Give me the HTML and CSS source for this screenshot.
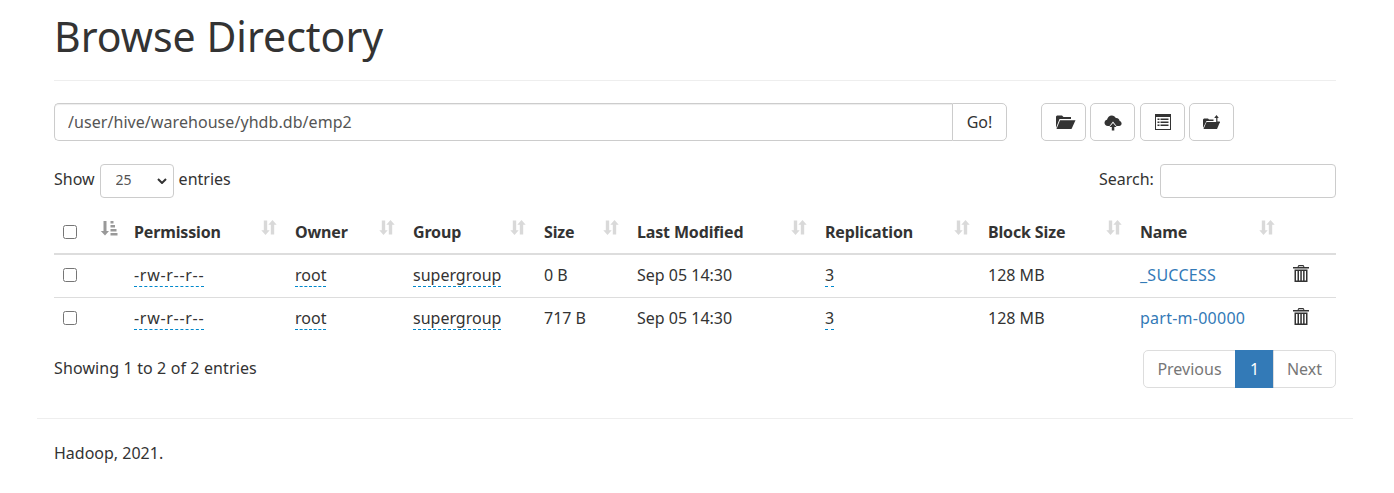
FILE: index.html
```html
<!DOCTYPE html>
<html lang="en">
<head>
  <meta charset="UTF-8">
  <title>Browsing HDFS</title>
  <link rel="stylesheet" href="styles.css">
</head>
<body>
  <div class="container">
    <div class="page-header">
      <h1>Browse Directory</h1>
    </div>

    <div class="toolbar">
      <div class="input-group">
        <input class="path-input" type="text" value="/user/hive/warehouse/yhdb.db/emp2">
        <button class="btn btn-go" type="button">Go!</button>
      </div>
      <div class="btn-row">
        <button class="btn btn-icon shift-2" type="button" title="Create Directory">
          <svg width="21" height="16" viewBox="0 0 21 16"><path fill="#333" d="M1 14V2.500L2 1.500h5l1.500 1.500h7.500v2H4.500L1 14z"/><path fill="#333" d="M5 6.300h15.500L16.500 15H1.500z"/></svg>
        </button>
        <button class="btn btn-icon" type="button" title="Upload Files">
          <svg width="18" height="17" viewBox="0 0 18 16"><path fill="#333" d="M4 11.500C1.800 11.500.5 10 .5 8.300.5 6.700 1.600 5.500 3 5.300 3.500 3 5.300 1 7.800 1c1.800 0 3.200 1 4 2.400 2.400-.2 3.800 1.500 3.800 3.100 1.200.3 2 1.300 2 2.500 0 1.400-1 2.500-2.500 2.500h-2.600L9 7 5.500 11.500z"/><path fill="#333" d="M9 8.500l3.500 4h-2.200V16H7.800v-3.500H5.500z"/></svg>
        </button>
        <button class="btn btn-icon btn-table" type="button" title="Cut">
          <svg width="16" height="16" viewBox="0 0 16 16"><path fill="#333" d="M0 0h16v16H0z"/><path fill="#fff" d="M1 3h14v12H1z"/><path fill="#333" d="M2.500 4.500h2v1.500h-2zM5.500 4.500h8v1.500h-8zM2.500 7.500h2V9h-2zM5.500 7.500h8V9h-8zM2.500 10.500h2V12h-2zM5.500 10.500h8V12h-8z"/></svg>
        </button>
        <button class="btn btn-icon" type="button" title="Paste">
          <svg width="18" height="15" viewBox="0 0 18 15"><path fill="#333" d="M0 13V4.500L1 3.500h4l1 1h4.500V6H3.500z"/><path fill="#333" d="M3.500 7H17L14 14H.5z"/><path fill="#333" d="M13.500 0l2.300 3h-1.400v3.500h2.400v1.200h-3.600V3h-2z"/></svg>
        </button>
      </div>
    </div>

    <div class="table-controls">
      <label class="length-label">Show
        <span class="select-wrap">
          <select class="length-select"><option>25</option></select>
          <svg class="chevron" width="10" height="6" viewBox="0 0 10 6"><path fill="none" stroke="#333" stroke-width="2" d="M1 1l4 4 4-4"/></svg>
        </span>
        entries</label>
      <label class="search-label">Search: <input class="search-input" type="search"></label>
    </div>

    <table class="file-table">
      <thead>
        <tr>
          <th class="col-check"><input class="check" type="checkbox"></th>
          <th class="col-sort">
            <svg class="sort-icon active" width="18" height="18" viewBox="0 0 18 16"><path d="M3.500 1h3v10h2.500L5 15.500.8 11h2.700z"/><path d="M10.500 1h3v2.500h-3zM10.500 5h4.500v2.500h-4.500zM10.500 9h6v2.500h-6zM10.500 13h7v2.500h-7z"/></svg>
          </th>
          <th class="col-perm"><span>Permission</span><svg class="sort-icon" width="16" height="17" viewBox="0 0 16 16"><use href="#sort-both"/></svg></th>
          <th class="col-owner"><span>Owner</span><svg class="sort-icon" width="16" height="17" viewBox="0 0 16 16"><use href="#sort-both"/></svg></th>
          <th class="col-group"><span>Group</span><svg class="sort-icon" width="16" height="17" viewBox="0 0 16 16"><use href="#sort-both"/></svg></th>
          <th class="col-size"><span>Size</span><svg class="sort-icon" width="16" height="17" viewBox="0 0 16 16"><use href="#sort-both"/></svg></th>
          <th class="col-date"><span>Last Modified</span><svg class="sort-icon" width="16" height="17" viewBox="0 0 16 16"><use href="#sort-both"/></svg></th>
          <th class="col-repl"><span>Replication</span><svg class="sort-icon" width="16" height="17" viewBox="0 0 16 16"><use href="#sort-both"/></svg></th>
          <th class="col-block"><span>Block Size</span><svg class="sort-icon" width="16" height="17" viewBox="0 0 16 16"><use href="#sort-both"/></svg></th>
          <th class="col-name"><span>Name</span><svg class="sort-icon" width="16" height="17" viewBox="0 0 16 16"><use href="#sort-both"/></svg></th>
          <th class="col-del"></th>
        </tr>
      </thead>
      <tbody>
        <tr>
          <td><input class="check" type="checkbox"></td>
          <td></td>
          <td><a class="editable perm" href="#">-rw-r--r--</a></td>
          <td><a class="editable" href="#">root</a></td>
          <td><a class="editable" href="#">supergroup</a></td>
          <td>0 B</td>
          <td>Sep 05 14:30</td>
          <td><a class="editable" href="#">3</a></td>
          <td>128 MB</td>
          <td><a class="file-link" href="#">_SUCCESS</a></td>
          <td><svg class="trash" width="16" height="17" viewBox="0 0 16 17"><use href="#trash"/></svg></td>
        </tr>
        <tr>
          <td><input class="check" type="checkbox"></td>
          <td></td>
          <td><a class="editable perm" href="#">-rw-r--r--</a></td>
          <td><a class="editable" href="#">root</a></td>
          <td><a class="editable" href="#">supergroup</a></td>
          <td>717 B</td>
          <td>Sep 05 14:30</td>
          <td><a class="editable" href="#">3</a></td>
          <td>128 MB</td>
          <td><a class="file-link" href="#">part-m-00000</a></td>
          <td><svg class="trash" width="16" height="17" viewBox="0 0 16 17"><use href="#trash"/></svg></td>
        </tr>
      </tbody>
    </table>

    <div class="table-footer">
      <div class="info">Showing 1 to 2 of 2 entries</div>
      <ul class="pagination">
        <li class="disabled prev">Previous</li>
        <li class="current">1</li>
        <li class="disabled next">Next</li>
      </ul>
    </div>
  </div>

  <footer class="site-footer">
    <p>Hadoop, 2021.</p>
  </footer>

  <svg class="defs" width="0" height="0">
    <symbol id="sort-both" viewBox="0 0 16 16">
      <path d="M2.800 1h3.400v9.800h2.500L4.500 15.500.3 10.800h2.500z"/>
      <path d="M9.800 15h3.400V5.200h2.500L11.500.5 7.300 5.200h2.500z"/>
    </symbol>
    <symbol id="trash" viewBox="0 0 16 17">
      <path fill="#333" d="M5.500 0h5l1 2H16v1.500H0V2h4.500zM6 1.200l-.4.800h4.800l-.4-.8z"/>
      <path fill="#333" d="M1.500 4.500h13V17h-13zM3 6v9.500h1.500V6zm3 0v9.500h1.300V6zm2.800 0v9.500h1.300V6zm2.800 0v9.500h1.400V6z"/>
    </symbol>
  </svg>
</body>
</html>
```

FILE: styles.css
```css
* {
  box-sizing: border-box;
}

body {
  margin: 0;
  font-family: "Noto Sans", "Open Sans", Arial, sans-serif;
  font-size: 16px;
  line-height: 22px;
  color: #333;
  background-color: #fff;
}

.container {
  width: 1316px;
  margin-left: 37px;
  padding: 0 17px;
}

.page-header {
  height: 81px;
  border-bottom: 1px solid #eee;
}

h1 {
  margin: 0;
  padding-top: 6px;
  font-size: 41px;
  font-weight: 400;
  line-height: 60px;
}

.toolbar {
  display: flex;
  margin-top: 22px;
}

.input-group {
  display: flex;
  width: 953px;
}

.path-input {
  width: 898px;
  height: 38px;
  padding: 0 13px;
  border: 1px solid #ccc;
  border-right: none;
  border-radius: 5px 0 0 5px;
  font: inherit;
  letter-spacing: .06px;
  color: #555;
  box-shadow: inset 0 1px 1px rgba(0, 0, 0, .075);
}

.btn {
  display: flex;
  align-items: center;
  justify-content: center;
  height: 38px;
  border: 1px solid #ccc;
  background-color: #fff;
  font: inherit;
  color: #333;
  border-radius: 5px;
}

.btn-go {
  width: 55px;
  border-radius: 0 5px 5px 0;
}

.btn-row {
  display: flex;
  gap: 4px;
  margin-left: 34px;
}

.btn-icon {
  width: 45px;
  padding: 0;
}

.btn-icon svg {
  margin-left: 1px;
}

.btn-icon.shift-2 svg {
  margin-left: 3px;
}

.btn-table {
  margin-left: 1px;
}

.table-controls {
  display: flex;
  justify-content: space-between;
  align-items: center;
  height: 34px;
  margin-top: 23px;
}

.length-label {
  display: flex;
  align-items: center;
  gap: 5px;
  margin-top: -4px;
}

.select-wrap {
  position: relative;
  display: block;
  height: 34px;
  margin-top: 4px;
}

.length-select {
  display: block;
  width: 74px;
  height: 34px;
  padding: 0 0 2px 15px;
  border: 1px solid #ccc;
  border-radius: 4px;
  background-color: #fff;
  appearance: none;
  font: inherit;
  font-size: 14px;
  color: #555;
}

.chevron {
  position: absolute;
  top: 14px;
  left: 57px;
}

.search-input {
  width: 176px;
  height: 34px;
  margin-left: 2px;
  border: 1px solid #ccc;
  border-radius: 4px;
  vertical-align: middle;
}

.file-table {
  width: 1282px;
  margin-top: 12px;
  border-collapse: collapse;
  table-layout: fixed;
}

th {
  position: relative;
  height: 44px;
  padding: 8px;
  border-bottom: 2px solid #ddd;
  text-align: left;
  font-weight: 700;
  letter-spacing: -.15px;
}

td {
  height: 43px;
  padding: 6px 8px 8px;
  border-bottom: 1px solid #ddd;
}

tbody tr:last-child td {
  border-bottom: none;
}

.col-check { width: 38px; }
.col-sort { width: 34px; }
.col-perm { width: 161px; }
.col-owner { width: 118px; }
.col-group { width: 131px; }
.col-size { width: 93px; }
.col-date { width: 188px; }
.col-repl { width: 163px; }
.col-block { width: 152px; }
.col-name { width: 153px; }

.check {
  width: 14px;
  height: 14px;
  margin: 0 0 2px 1px;
  vertical-align: middle;
}

.sort-icon {
  position: absolute;
  top: 9px;
  right: 10px;
  fill: #d9d9d9;
}

.sort-icon.active {
  fill: #999;
  left: 8px;
  right: auto;
}

.editable {
  color: #333;
  text-decoration: none;
  border-bottom: 1px dashed #08c;
}

.perm {
  letter-spacing: .7px;
}

.file-link {
  color: #337ab7;
  text-decoration: none;
  letter-spacing: .25px;
}

.trash {
  display: block;
  margin-top: -3px;
}

.table-footer {
  display: flex;
  justify-content: space-between;
  align-items: flex-start;
  margin-top: 10px;
}

.info {
  margin-top: 7px;
  letter-spacing: .12px;
}

.pagination {
  display: flex;
  margin: 0;
  padding: 0;
  list-style: none;
}

.pagination li {
  width: 39px;
  height: 38px;
  padding: 7px 0;
  border: 1px solid #ddd;
  margin-left: -1px;
  text-align: center;
  color: #777;
}

.pagination .prev {
  width: 93px;
  border-radius: 5px 0 0 5px;
}

.pagination .next {
  width: 63px;
  border-radius: 0 5px 5px 0;
}

.pagination .current {
  border-color: #337ab7;
  background-color: #337ab7;
  color: #fff;
}

.site-footer {
  width: 1316px;
  margin: 30px 0 0 37px;
  padding: 23px 17px 0;
  border-top: 1px solid #eee;
}

.site-footer p {
  margin: 0;
}

.defs {
  position: absolute;
}
```
